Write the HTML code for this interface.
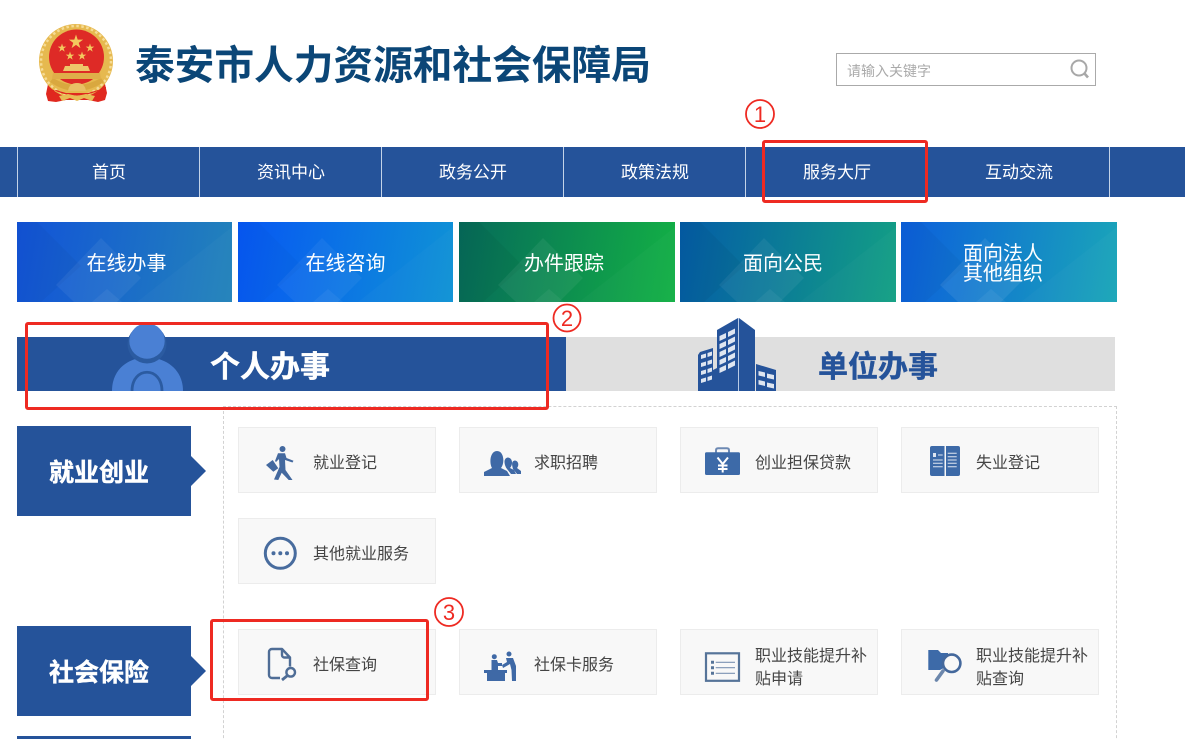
<!DOCTYPE html>
<html lang="zh-CN">
<head>
<meta charset="utf-8">
<title>泰安市人力资源和社会保障局</title>
<style>
html,body{margin:0;padding:0;background:#fff;width:1185px;height:739px;overflow:hidden}
#w{width:1185px;height:739px;overflow:hidden;position:relative;font-family:"Liberation Sans","Noto Sans CJK SC",sans-serif}
.a{position:absolute}
.title{left:135px;top:38px;font-size:39.700px;line-height:56px;color:#0b4677;font-weight:700;white-space:nowrap}
.search{left:836px;top:53px;width:258px;height:31px;border:1px solid #aaa;background:#fff}
.search span{position:absolute;left:10px;top:8px;font-size:14px;line-height:18px;color:#aaa}
.nav{left:0;top:147px;width:1185px;height:50px;background:#25539a}
.nav i{position:absolute;top:0;width:1px;height:50px;background:#c4d3e8}
.nav b{position:absolute;top:1px;width:182px;text-align:center;font-weight:400;font-size:17px;line-height:50px;color:#fff}
.tile{top:222px;height:80px;color:#fff;font-size:20px;text-align:center;display:flex;align-items:center;justify-content:center;line-height:20px;overflow:hidden}
.tile svg{position:absolute;left:0;top:0}
.tile span{position:relative;top:2px}
.tab{top:337px;height:54px}
.tabt{top:349px;font-size:30px;line-height:38px;font-weight:700;white-space:nowrap;-webkit-text-stroke:.4px currentColor}
.dash{left:223px;top:406px;width:892px;height:360px;border:1px dashed #d2d2d2}
.lab{left:17px;width:164px;padding-right:10px;height:90px;background:#25539a;color:#fff;font-size:25px;font-weight:700;text-align:center;line-height:95px;-webkit-text-stroke:.4px #fff}
.arr{left:191px;width:0;height:0;border-left:15px solid #25539a;border-top:15px solid transparent;border-bottom:15px solid transparent}
.card{width:196px;height:64px;background:#f8f8f8;border:1px solid #ececec}
.card p{position:absolute;left:74px;top:3px;margin:0;width:118px;height:64px;display:flex;align-items:center;font-size:16px;line-height:23px;color:#444}
.card p.d{top:6px}
.card svg{position:absolute;left:0;top:0}
.red{border:3px solid #ee2a22;border-radius:3px;box-sizing:border-box}
</style>
</head>
<body>
<div id="w">

<!-- emblem -->
<svg class="a" style="left:36px;top:22px" width="82" height="84" viewBox="36 22 82 84">
  <defs><path id="s" d="M0-1 .225-.309H.951L.363.118.588.809 0 .382-.588.809-.363.118-.951-.309H-.225Z"/></defs>
  <path d="M48 84 L46 94 L48 101 L56 102 L66 100 L88 100 L98 102 L105 100 L107 93 L105 84 Z" fill="#e0281f"/>
  <circle cx="76" cy="61" r="37" fill="#e6b94f"/>
  <circle cx="76" cy="61" r="35" fill="none" stroke="#f6dc96" stroke-width="2.500" stroke-dasharray="2.500 2.500"/>
  <circle cx="76.500" cy="57" r="27.500" fill="#de2a26"/>
  <path d="M50 82 Q76 100 104 82 L101 78 Q76 92 53 78Z" fill="#d9a83f"/>
  <path d="M48 87 Q76 104 106 87 L106 94 L98 90 L88 93 L66 93 L56 90 L47 94Z" fill="#e0281f"/>
  <path d="M59 96 L68 94 L77 96 L86 94 L95 96 L92 101 L84 98 L77 101 L70 98 L62 101Z" fill="#e8bc55"/>
  <path d="M68 91 Q69 83 77 83 Q85 83 86 91Z" fill="#e9c065"/>
  <path d="M63 71 L65 66 H70 V64 H83 V66 H88 L90 71Z" fill="#eec66a"/>
  <path d="M53 73 H100 L101 79 H52Z" fill="#dfae49"/>
  <g fill="#f3c95e">
    <use href="#s" transform="translate(76 42) scale(7.500)"/>
    <use href="#s" transform="translate(62 48) scale(4.500)"/>
    <use href="#s" transform="translate(90 48) scale(4.500)"/>
    <use href="#s" transform="translate(70 56) scale(4.500)"/>
    <use href="#s" transform="translate(82 56) scale(4.500)"/>
  </g>
</svg>

<div class="a title">泰安市人力资源和社会保障局</div>

<div class="a search"><span>请输入关键字</span>
  <svg class="a" style="left:231px;top:3px" width="24" height="24" viewBox="0 0 24 24" fill="none" stroke="#a8a8a8"><circle cx="11" cy="11" r="7.500" stroke-width="2"/><path d="M16.500 16.500L20 20.500" stroke-width="2.600"/></svg>
</div>

<div class="a nav">
  <i style="left:17px"></i><i style="left:199px"></i><i style="left:381px"></i><i style="left:563px"></i><i style="left:745px"></i><i style="left:1109px"></i>
  <b style="left:18px">首页</b><b style="left:200px">资讯中心</b><b style="left:382px">政务公开</b><b style="left:564px">政策法规</b><b style="left:746px">服务大厅</b><b style="left:928px">互动交流</b>
</div>

<!-- tiles -->
<div class="a tile" style="left:17px;width:215px;background:linear-gradient(100deg,#1253d8,#2283ba)">
  <svg width="215" height="80"><path d="M0 0H20L64 44L24 80H0Z" fill="#000" opacity=".03"/><path d="M84 16L124 56L100 80H57L39 63Z" fill="#fff" opacity=".06"/><path d="M90 67L105 80H75Z" fill="#fff" opacity=".05"/><path d="M120 80L215 5V80Z" fill="#fff" opacity=".025"/></svg>
  <span style="left:2px">在线办事</span></div>
<div class="a tile" style="left:238px;width:215px;background:linear-gradient(100deg,#0757f3,#0f93d5)">
  <svg width="215" height="80"><path d="M0 0H20L64 44L24 80H0Z" fill="#000" opacity=".02"/><path d="M84 16L124 56L100 80H57L39 63Z" fill="#fff" opacity=".05"/><path d="M90 67L105 80H75Z" fill="#fff" opacity=".05"/><path d="M120 80L215 5V80Z" fill="#fff" opacity=".025"/></svg>
  <span>在线咨询</span></div>
<div class="a tile" style="left:459px;width:216px;background:linear-gradient(100deg,#066a5a,#13b145)">
  <svg width="216" height="80"><path d="M0 0H20L64 44L24 80H0Z" fill="#000" opacity=".04"/><path d="M84 16L124 56L100 80H57L39 63Z" fill="#fff" opacity=".06"/><path d="M90 67L105 80H75Z" fill="#fff" opacity=".05"/><path d="M120 80L216 5V80Z" fill="#fff" opacity=".025"/></svg>
  <span style="left:-3px">办件跟踪</span></div>
<div class="a tile" style="left:680px;width:216px;background:linear-gradient(100deg,#045ca7,#13a084)">
  <svg width="216" height="80"><path d="M0 0H20L64 44L24 80H0Z" fill="#000" opacity=".04"/><path d="M84 16L124 56L100 80H57L39 63Z" fill="#fff" opacity=".06"/><path d="M90 67L105 80H75Z" fill="#fff" opacity=".05"/><path d="M120 80L216 5V80Z" fill="#fff" opacity=".025"/></svg>
  <span style="left:-5px">面向公民</span></div>
<div class="a tile" style="left:901px;width:216px;background:linear-gradient(100deg,#0c5fdc,#1aa6b8)">
  <svg width="216" height="80"><path d="M0 0H20L64 44L24 80H0Z" fill="#000" opacity=".03"/><path d="M84 16L124 56L100 80H57L39 63Z" fill="#fff" opacity=".08"/><path d="M90 67L105 80H75Z" fill="#fff" opacity=".05"/><path d="M120 80L216 5V80Z" fill="#fff" opacity=".025"/></svg>
  <span style="left:-6px">面向法人<br>其他组织</span></div>

<!-- tabs -->
<div class="a tab" style="left:17px;width:549px;background:#25539a"></div>
<div class="a tab" style="left:566px;width:549px;background:#dfdfdf"></div>
<svg class="a" style="left:105px;top:320px" width="84" height="71" viewBox="0 0 84 71">
  <path d="M7 71C7 50 22 38 42 37C62 38 78 50 78 71Z" fill="#4a80d4"/>
  <path d="M27 71C27 46 57 46 57 71" fill="none" stroke="#2b5ba1" stroke-width="2.800"/>
  <circle cx="42" cy="24" r="19.500" fill="#2b5ba1"/>
  <circle cx="42" cy="21" r="17.700" fill="#4a80d4"/>
</svg>
<div class="a tabt" style="left:210px;color:#fff">个人办事</div>
<svg class="a" style="left:698px;top:318px" width="80" height="73" viewBox="0 0 80 73">
  <path d="M0 49V37L2 34L15 30V52L19 50V12L40 0V73H0Z" fill="#25539a"/>
  <path d="M41 0L57 12V73H41Z" fill="#25539a"/>
  <path d="M58 46L78 52V73H58Z" fill="#25539a"/>
  <g fill="#dfe6f1">
    <path d="M21.500 18l6.500-3v5l-6.500 3zM30 14l7-3.500v5l-7 3.500zM21.500 26l6.500-3v5l-6.500 3zM30 22l7-3.500v5l-7 3.500zM21.500 34l6.500-3v5l-6.500 3zM30 30l7-3.500v5l-7 3.500zM21.500 42l6.500-3v5l-6.500 3zM30 38l7-3.500v5l-7 3.500zM21.500 50l6.500-3v5l-6.500 3zM30 46l7-3.500v5l-7 3.500z"/>
    <path d="M3 37l5-1.500v4l-5 1.500zM9.500 35l4.500-1.500v4l-4.500 1.500zM3 45l5-1.500v4l-5 1.500zM9.500 43l4.500-1.500v4l-4.500 1.500zM3 53l5-1.500v4l-5 1.500zM9.500 51l4.500-1.500v4l-4.500 1.500zM3 61l5-1.500v4l-5 1.500zM9.500 59l4.500-1.500v4l-4.500 1.500z"/>
    <path d="M60.500 53l6.500 1.500v4.500l-6.500-1.500zM69 55.500l7 1.500v4.500l-7-1.500zM60.500 62l6.500 1.500v4.500l-6.500-1.500zM69 64.500l7 1.500v4.500l-7-1.500z"/>
  </g>
  <path d="M40.500 0V73" stroke="#b9cbe6" stroke-width="1"/>
</svg>
<div class="a tabt" style="left:818px;color:#25539a">单位办事</div>

<div class="a dash"></div>

<!-- side labels -->
<div class="a lab" style="top:426px">就业创业</div><div class="a arr" style="top:456px"></div>
<div class="a lab" style="top:626px">社会保险</div><div class="a arr" style="top:656px"></div>
<div class="a" style="left:17px;top:736px;width:174px;height:10px;background:#25539a"></div>

<!-- row 1 -->
<div class="a card" style="left:238px;top:427px"><svg width="70" height="64" fill="#44699f" viewBox="0 0 70 64">
  <circle cx="43.500" cy="21" r="3"/>
  <path d="M39 25.300H46L47.500 30L54.500 32.700L53.500 34.500L46 32L46.500 42L53.500 52H49.700L42.700 44.700L39.300 52L35 51.500L40.500 39L40 31L37 34L36 33Z"/>
  <path d="M27 37L33.700 32L39.300 40.300L34.300 43.700Z"/>
</svg><p>就业登记</p></div>
<div class="a card" style="left:459px;top:427px"><svg width="70" height="64" fill="#3f69a6" viewBox="0 0 70 64">
  <path d="M24 48V44L32 40C29 35 30 23 37 23C44 23 45 35 41 40L47 43L50 48Z"/>
  <path d="M47 41C44 37 43 30 48 29.500C53 30 53 37 50 40L54 42L56 46H51Z"/>
  <path d="M53 41C52 37 51 33 55 32.500C59 33 59 38 57 40L61 43V46H57Z"/>
</svg><p>求职招聘</p></div>
<div class="a card" style="left:680px;top:427px"><svg width="70" height="64" viewBox="0 0 70 64">
  <path d="M35 25V22.500Q35 20.300 37 20.300H46Q48 20.300 48 22.500V25" fill="none" stroke="#6d89b3" stroke-width="2"/>
  <rect x="24" y="24.300" width="35" height="22.700" rx="1.500" fill="#3d6aa8"/>
  <path d="M36.500 29.500L41.700 36L47 29.500M41.700 36V44.500M37 37.500H46.500M37 41H46.500" fill="none" stroke="#fff" stroke-width="2"/>
</svg><p>创业担保贷款</p></div>
<div class="a card" style="left:901px;top:427px"><svg width="70" height="64" viewBox="0 0 70 64">
  <path d="M30 18H42.500V48H30a2 2 0 0 1-2-2V20a2 2 0 0 1 2-2Z" fill="#3d6aa8"/>
  <path d="M44 18H56a2 2 0 0 1 2 2V46a2 2 0 0 1-2 2H44Z" fill="#3d6aa8"/>
  <path d="M45.700 25.300H54.700M45.700 28.700H54.700M45.700 32H54.700M45.700 35.300H54.700M45.700 38.700H54.700M31 32H40.700M31 35.300H40.700M31 38.700H40.700M36 27H40.700" stroke="#dfe6f1" stroke-width="1"/>
  <path d="M31 29V25H34V29Z" fill="#dfe6f1"/>
</svg><p>失业登记</p></div>
<!-- row 2 -->
<div class="a card" style="left:238px;top:518px"><svg width="70" height="64" viewBox="0 0 70 64">
  <circle cx="41.300" cy="34.300" r="15" fill="none" stroke="#486c9e" stroke-width="3"/>
  <circle cx="34.500" cy="34.300" r="2" fill="#486c9e"/><circle cx="41.300" cy="34.300" r="2" fill="#486c9e"/><circle cx="48" cy="34.300" r="2" fill="#486c9e"/>
</svg><p>其他就业服务</p></div>
<!-- row 3 -->
<div class="a card" style="left:238px;top:629px"><svg width="70" height="64" viewBox="0 0 70 64" fill="none" stroke="#4f6d96" stroke-width="2.400" stroke-linejoin="round">
  <path d="M41 48H33a3 3 0 0 1-3-3V22a3 3 0 0 1 3-3H43L51 27.500V36.500"/>
  <path d="M43 19V25a2.500 2.500 0 0 0 2.500 2.500H51"/>
  <circle cx="51.700" cy="42.300" r="4.300"/>
  <path d="M48.500 45.500L43 50" stroke-width="2.800"/>
</svg><p>社保查询</p></div>
<div class="a card" style="left:459px;top:629px"><svg width="70" height="64" viewBox="0 0 70 64" fill="#3f69a6">
  <circle cx="34.300" cy="26.700" r="2.500"/><circle cx="49" cy="24" r="2.500"/>
  <path d="M46 28H53L56 36V51H52L51.500 40L50 34L43 38L42 35L47 32Z"/>
  <path d="M31.500 30H37L38 33L42 33V36L38 36V40H31.500Z"/>
  <path d="M24 40H47V43H45V51H27V43H24Z"/>
</svg><p>社保卡服务</p></div>
<div class="a card" style="left:680px;top:629px"><svg width="70" height="64" viewBox="0 0 70 64" fill="none" stroke="#567499">
  <rect x="25" y="23.300" width="33" height="27.500" stroke-width="2.200"/>
  <path d="M34.700 32.300H54M34.700 37.700H54M34.700 43.300H54" stroke-width="1.200" stroke="#7d94b4"/>
  <path d="M30 32.300H33M30 37.700H33M30 43.300H33" stroke-width="3"/>
</svg><p class="d">职业技能提升补贴申请</p></div>
<div class="a card" style="left:901px;top:629px"><svg width="70" height="64" viewBox="0 0 70 64">
  <path d="M26.300 20H36L39 23H46V36L38 40H26.300Z" fill="#3d6aa8"/>
  <circle cx="49.700" cy="33.300" r="8.700" fill="#f8f8f8" stroke="#44689c" stroke-width="2.600"/>
  <path d="M41 41L34.500 50" stroke="#6c87ac" stroke-width="3.600" stroke-linecap="round"/>
</svg><p class="d">职业技能提升补贴查询</p></div>

<!-- annotations -->
<div class="a red" style="left:762px;top:140px;width:166px;height:63px"></div>
<div class="a red" style="left:25px;top:322px;width:524px;height:88px"></div>
<div class="a red" style="left:210px;top:619px;width:219px;height:82px"></div>
<svg class="a" style="left:743px;top:98px" width="34" height="34" viewBox="0 0 34 34" fill="none" stroke="#ee2a22" stroke-width="1.800"><circle cx="17" cy="16" r="14"/><text x="17" y="24" text-anchor="middle" font-size="22" font-family="Liberation Sans,sans-serif" fill="#ee2a22" stroke="none">1</text></svg>
<svg class="a" style="left:550px;top:301px" width="34" height="34" viewBox="0 0 34 34" fill="none" stroke="#ee2a22" stroke-width="1.800"><circle cx="17" cy="17" r="13.500"/><text x="17" y="25" text-anchor="middle" font-size="22" font-family="Liberation Sans,sans-serif" fill="#ee2a22" stroke="none">2</text></svg>
<svg class="a" style="left:432px;top:596px" width="34" height="34" viewBox="0 0 34 34" fill="none" stroke="#ee2a22" stroke-width="1.800"><circle cx="17" cy="16" r="14"/><text x="17" y="24" text-anchor="middle" font-size="22" font-family="Liberation Sans,sans-serif" fill="#ee2a22" stroke="none">3</text></svg>

</div>
</body>
</html>
